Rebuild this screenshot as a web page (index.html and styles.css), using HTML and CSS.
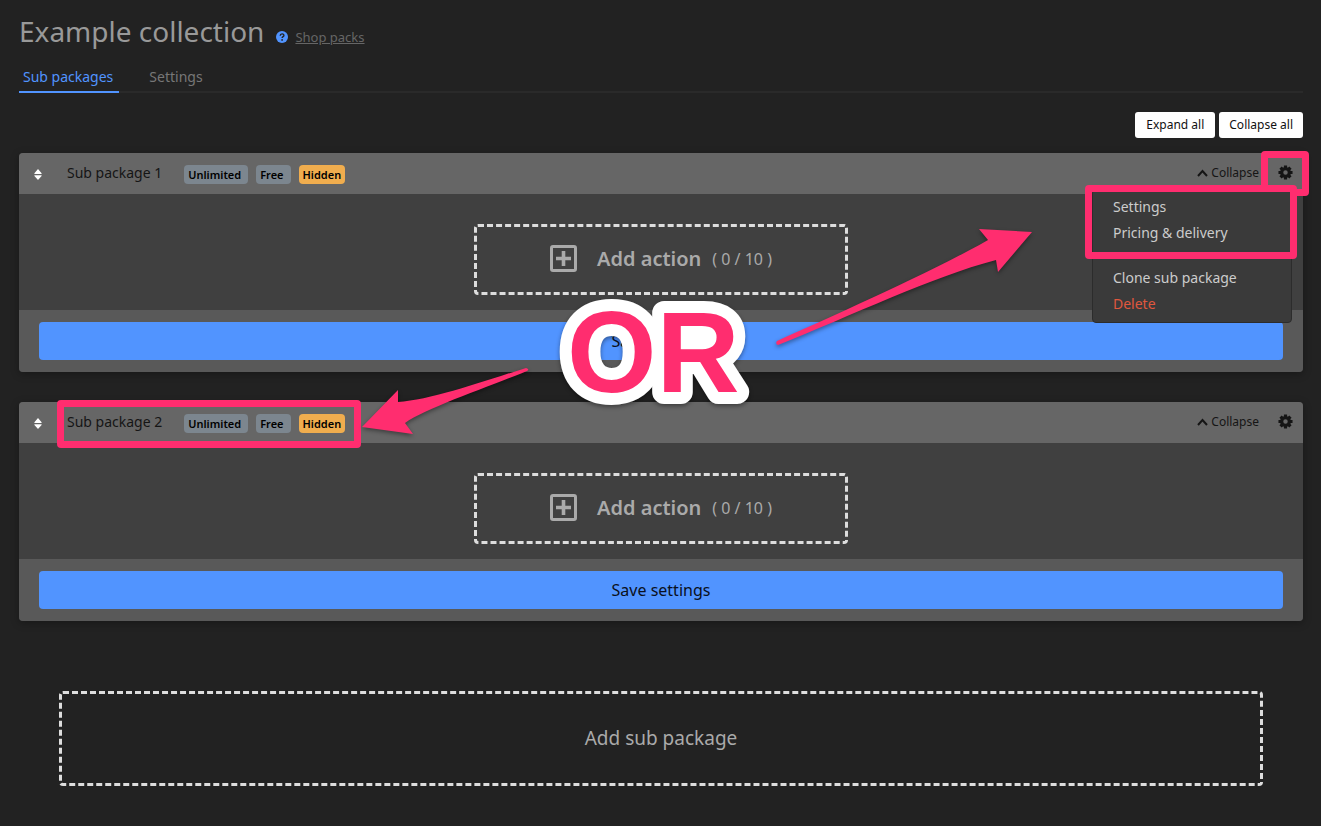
FILE: index.html
```html
<!DOCTYPE html>
<html lang="en">
<head>
<meta charset="utf-8">
<meta name="viewport" content="width=device-width, initial-scale=1">
<title>Example collection</title>
<link rel="stylesheet" href="styles.css">
</head>
<body>
<svg class="symbols" aria-hidden="true">
  <symbol id="sort" viewBox="0 0 8 11"><path d="M4 0 7.6 4.2Q8 5 7.2 5H.8Q0 5 .4 4.2ZM4 11 .4 7Q0 6.200 .8 6.200H7.200Q8 6.200 7.600 7Z" fill="#fff"/></symbol>
  <symbol id="chevron" viewBox="0 0 11 8"><path d="M1 7 5.500 2 10 7" fill="none" stroke="currentColor" stroke-width="2"/></symbol>
  <symbol id="gear" viewBox="0 0 16 16"><path fill="none" stroke="currentColor" stroke-width="3.400" d="M8 .5v3M8 12.500v3M.5 8h3M12.500 8h3M2.700 2.700l2.100 2.100M11.200 11.200l2.100 2.100M2.700 13.300l2.100-2.100M11.200 4.800l2.100-2.100"/><circle cx="8" cy="8" r="4.100" fill="none" stroke="currentColor" stroke-width="3.400"/></symbol>
  <symbol id="plus-box" viewBox="0 0 27 27"><rect x="1.500" y="1.500" width="24" height="24" rx="1.500" fill="none" stroke="currentColor" stroke-width="3"/><path d="M13.500 6v15M6 13.500h15" stroke="currentColor" stroke-width="3.600"/></symbol>
</svg>
<main class="page">
  <header class="title-bar">
    <h1 class="title">Example collection</h1>
    <svg class="help" viewBox="0 0 12 12" role="img" aria-label="Help"><circle cx="6" cy="6" r="6" fill="#5194ff"/><path d="M4.200 4.700C4.300 2.300 7.900 2.400 7.900 4.400 7.900 5.600 6.100 5.600 6.100 7" fill="none" stroke="#222" stroke-width="1.400"/><circle cx="6.100" cy="8.900" r=".9" fill="#222"/></svg>
    <a class="breadcrumb" href="#">Shop packs</a>
  </header>
  <nav class="tabs">
    <a class="tab tab-active" href="#">Sub packages</a>
    <a class="tab" href="#">Settings</a>
  </nav>
  <div class="toolbar">
    <button class="small-button" type="button">Expand all</button>
    <button class="small-button" type="button">Collapse all</button>
  </div>

  <section class="card">
    <header class="card-header">
      <svg class="sort-icon"><use href="#sort"/></svg>
      <div class="summary">
        <h2 class="card-title">Sub package 1</h2>
        <span class="badge badge-wide">Unlimited</span>
        <span class="badge badge-wide">Free</span>
        <span class="badge badge-hidden">Hidden</span>
      </div>
      <button class="collapse" type="button"><svg class="chevron"><use href="#chevron"/></svg>Collapse</button>
      <button class="gear" type="button" aria-label="Options"><svg class="gear-icon"><use href="#gear"/></svg><span class="mark mark-gear"></span></button>
    </header>
    <div class="card-body">
      <button class="add-action" type="button"><svg class="plus"><use href="#plus-box"/></svg><strong class="add-label">Add action</strong><span class="count">( 0 / 10 )</span></button>
    </div>
    <footer class="card-footer"><button class="save" type="button">Save settings</button></footer>
    <div class="menu">
      <div class="menu-group">
        <button class="menu-item" type="button">Settings</button>
        <button class="menu-item" type="button">Pricing &amp; delivery</button>
        <span class="mark mark-menu"></span>
      </div>
      <div class="menu-group">
        <button class="menu-item" type="button">Clone sub package</button>
        <button class="menu-item menu-danger" type="button">Delete</button>
      </div>
    </div>
  </section>

  <section class="card">
    <header class="card-header">
      <svg class="sort-icon"><use href="#sort"/></svg>
      <div class="summary">
        <h2 class="card-title">Sub package 2</h2>
        <span class="badge badge-wide">Unlimited</span>
        <span class="badge badge-wide">Free</span>
        <span class="badge badge-hidden">Hidden</span>
        <span class="mark mark-summary"></span>
      </div>
      <button class="collapse" type="button"><svg class="chevron"><use href="#chevron"/></svg>Collapse</button>
      <button class="gear" type="button" aria-label="Options"><svg class="gear-icon"><use href="#gear"/></svg></button>
    </header>
    <div class="card-body">
      <button class="add-action" type="button"><svg class="plus"><use href="#plus-box"/></svg><strong class="add-label">Add action</strong><span class="count">( 0 / 10 )</span></button>
    </div>
    <footer class="card-footer"><button class="save" type="button">Save settings</button></footer>
  </section>

  <button class="add-package" type="button">Add sub package</button>

  <svg class="arrows" viewBox="360 220 680 220">
    <g class="arrow">
      <path d="M361 427 397 390 397 402C430 400 480 382 525 368Q529 369 526 371C490 386 425 408 404 423L412 434Z"/>
      <path d="M1031 232 978 229 987 240C940 267 850 308 776 341Q774 344 777 345C850 316 930 277 995 260L997 272Z"/>
    </g>
    <text class="or" x="566" y="392">OR</text>
  </svg>
</main>
</body>
</html>
```

FILE: styles.css
```css
* { box-sizing: border-box; }

body {
  margin: 0;
  background: #222;
  color: #999;
  font-family: "Noto Sans", "Open Sans", sans-serif;
  font-size: 14px;
}

button {
  margin: 0;
  padding: 0;
  border: 0;
  background: none;
  color: inherit;
  font: inherit;
  cursor: pointer;
}

svg { flex: none; }
.symbols { position: absolute; width: 0; height: 0; }

.page {
  position: relative;
  padding: 11px 18px 40px 19px;
}

.title-bar { display: flex; align-items: baseline; height: 51px; }
.title { margin: 0; font-size: 28px; font-weight: 400; line-height: 40px; }
.help { align-self: flex-start; width: 12px; height: 12px; margin: 20px 7px 0 12px; }
.breadcrumb { color: #666; font-size: 13px; }

.tabs { display: flex; gap: 26px; height: 31px; border-bottom: 2px solid #2a2a2a; }
.tab { height: 31px; padding: 0 5px 0 4px; color: #777; line-height: 30px; text-decoration: none; }
.tab-active { padding-right: 6px; border-bottom: 2px solid #5194ff; color: #5194ff; }

.toolbar { display: flex; justify-content: flex-end; gap: 4px; padding: 19px 0 15px; }
.small-button {
  height: 26px;
  padding: 0 11px 2px;
  border-radius: 3px;
  background: #fff;
  color: #111;
  font-size: 12px;
}
.small-button + .small-button { padding: 0 10px 2px; }

.card {
  position: relative;
  margin-bottom: 30px;
  border-radius: 4px;
  background: #404040;
  box-shadow: 0 2px 8px rgba(0, 0, 0, .3);
}
.card-header {
  display: flex;
  align-items: center;
  height: 41px;
  padding: 0 10px 2px 15px;
  border-radius: 4px 4px 0 0;
  background: #666;
  color: #151515;
}
.sort-icon { width: 8px; height: 11px; margin-right: 25px; margin-top: 4px; }
.summary { position: relative; display: flex; align-items: center; gap: 8px; margin-right: auto; }
.card-title { margin: 0 14px 0 0; font-size: 14px; font-weight: 400; line-height: 20px; }
.badge {
  height: 19px;
  margin-top: 3px;
  padding: 0 4px;
  border-radius: 4px;
  background: #7c868f;
  color: #000;
  font-size: 11px;
  font-weight: 600;
  line-height: 19px;
}
.badge-wide { padding-right: 7px; }
.badge-hidden { background: #f0ad4e; }
.collapse { display: flex; align-items: center; gap: 3px; font-size: 12px; }
.chevron { width: 11px; height: 8px; }
.gear { position: relative; display: flex; margin-left: 19px; }
.gear-icon { width: 15px; height: 15px; }

.card-body { padding: 30px 20px 15px; }
.add-action {
  display: flex;
  align-items: center;
  justify-content: center;
  width: 100%;
  max-width: 374px;
  height: 71px;
  margin: 0 auto;
  padding-bottom: 2px;
  border: 3px dashed #ddd;
  border-radius: 4px;
  color: #aaa;
}
.plus { width: 27px; height: 27px; }
.add-label { margin: 0 11px 0 20px; font-size: 20px; font-weight: 600; }
.count { font-size: 16px; }

.card-footer { padding: 12px 20px; border-radius: 0 0 4px 4px; background: #595959; }
.save {
  display: block;
  width: 100%;
  height: 38px;
  border-radius: 4px;
  background: #5194ff;
  color: #0a1020;
  font-size: 16px;
}

.menu {
  position: absolute;
  top: 36px;
  right: 11px;
  z-index: 1;
  width: 200px;
  padding: 3px 0 6px;
  border: 1px solid #2c2c2c;
  border-radius: 4px;
  background: #3a3a3a;
  color: #ccc;
}
.menu-group { position: relative; }
.menu-group + .menu-group { margin-top: 19px; }
.menu-item {
  display: block;
  width: 100%;
  height: 26px;
  padding: 0 20px;
  text-align: left;
}
.menu-danger { color: #e0573e; }

.add-package {
  display: block;
  width: calc(100% - 80px);
  height: 95px;
  margin: 70px auto 0;
  padding-bottom: 2px;
  border: 3px dashed #ddd;
  border-radius: 4px;
  color: #aaa;
  font-size: 19px;
}

/* Tutorial highlights laid over the interface */
.mark {
  position: absolute;
  border: 7px solid #ff2d6f;
  border-radius: 4px;
  pointer-events: none;
}
.mark-gear { inset: -14px -16px -16px -17px; }
.mark-menu { inset: -8px -6px -14px -8px; }
.mark-summary { inset: -11px -16px -15px -10px; }

.arrows {
  position: absolute;
  top: 220px;
  left: 50%;
  z-index: 2;
  width: 680px;
  height: 220px;
  margin-left: -300px;
  overflow: visible;
  pointer-events: none;
  filter: drop-shadow(0 2px 2px rgba(0, 0, 0, .4));
}
.arrow { fill: #ff2d6f; }
.or {
  fill: #ff2d6f;
  stroke: #fff;
  stroke-width: 24px;
  stroke-linejoin: round;
  paint-order: stroke;
  font-family: "Liberation Sans", Arial, sans-serif;
  font-size: 115px;
  font-weight: 700;
}
```
